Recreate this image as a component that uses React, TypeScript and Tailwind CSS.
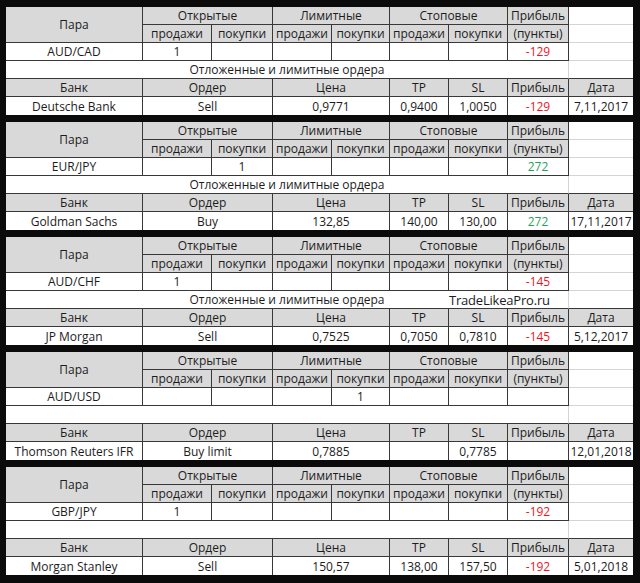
import React from "react"

type Tone = "red" | "green" | ""

interface Trade {
  pair: string
  open: [string, string]
  limit: [string, string]
  stop: [string, string]
  profit: string
  tone: Tone
  note: boolean
  watermark?: string
  bank: string
  order: string
  price: string
  tp: string
  sl: string
  date: string
}

const trades: Trade[] = [
  { pair: "AUD/CAD", open: ["1", ""], limit: ["", ""], stop: ["", ""], profit: "-129", tone: "red", note: true, bank: "Deutsche Bank", order: "Sell", price: "0,9771", tp: "0,9400", sl: "1,0050", date: "7,11,2017" },
  { pair: "EUR/JPY", open: ["", "1"], limit: ["", ""], stop: ["", ""], profit: "272", tone: "green", note: true, bank: "Goldman Sachs", order: "Buy", price: "132,85", tp: "140,00", sl: "130,00", date: "17,11,2017" },
  { pair: "AUD/CHF", open: ["1", ""], limit: ["", ""], stop: ["", ""], profit: "-145", tone: "red", note: true, watermark: "TradeLikeaPro.ru", bank: "JP Morgan", order: "Sell", price: "0,7525", tp: "0,7050", sl: "0,7810", date: "5,12,2017" },
  { pair: "AUD/USD", open: ["", ""], limit: ["", "1"], stop: ["", ""], profit: "", tone: "", note: false, bank: "Thomson Reuters IFR", order: "Buy limit", price: "0,7885", tp: "", sl: "0,7785", date: "12,01,2018" },
  { pair: "GBP/JPY", open: ["1", ""], limit: ["", ""], stop: ["", ""], profit: "-192", tone: "red", note: false, bank: "Morgan Stanley", order: "Sell", price: "150,57", tp: "138,00", sl: "157,50", date: "5,01,2018" },
]

const toneClass = (t: Tone) =>
  t === "red" ? "text-[#f0141e]" : t === "green" ? "text-[#1fa35a]" : ""

function Cell({ children, className = "" }: { children?: React.ReactNode; className?: string }) {
  return (
    <div className={`flex items-center justify-center whitespace-nowrap pt-px border-r border-b border-[#383838] leading-none ${className}`}>
      {children}
    </div>
  )
}

const head = "bg-[#d9d9d9]"
const side = "bg-white border-r-0 border-b-[#d4d4d4]"

function TradeBlock({ t }: { t: Trade }) {
  return (
    <div className="grid grid-cols-[137px_69px_61px_59px_58px_59px_59px_61px_64px] grid-rows-[repeat(6,18px)] bg-white">
      <Cell className={`${head} row-span-2`}>Пара</Cell>
      <Cell className={`${head} col-span-2`}>Открытые</Cell>
      <Cell className={`${head} col-span-2`}>Лимитные</Cell>
      <Cell className={`${head} col-span-2`}>Стоповые</Cell>
      <Cell className={head}>Прибыль</Cell>
      <Cell className={side} />

      <Cell className={head}>продажи</Cell>
      <Cell className={head}>покупки</Cell>
      <Cell className={head}>продажи</Cell>
      <Cell className={head}>покупки</Cell>
      <Cell className={head}>продажи</Cell>
      <Cell className={head}>покупки</Cell>
      <Cell className={head}>(пункты)</Cell>
      <Cell className={side} />

      <Cell>{t.pair}</Cell>
      <Cell>{t.open[0]}</Cell>
      <Cell>{t.open[1]}</Cell>
      <Cell>{t.limit[0]}</Cell>
      <Cell>{t.limit[1]}</Cell>
      <Cell>{t.stop[0]}</Cell>
      <Cell>{t.stop[1]}</Cell>
      <Cell className={toneClass(t.tone)}>{t.profit}</Cell>
      <Cell className={side} />

      <Cell className="relative col-span-8 border-r-[#d4d4d4]">
        {t.note ? "Отложенные и лимитные ордера" : ""}
        {t.watermark && (
          <span className="absolute left-[443px] top-[3px] text-[13px] tracking-[-0.2px]">{t.watermark}</span>
        )}
      </Cell>
      <Cell className="bg-white border-r-0" />

      <Cell className={head}>Банк</Cell>
      <Cell className={`${head} col-span-2`}>Ордер</Cell>
      <Cell className={`${head} col-span-2`}>Цена</Cell>
      <Cell className={head}>TP</Cell>
      <Cell className={head}>SL</Cell>
      <Cell className={head}>Прибыль</Cell>
      <Cell className={`${head} border-r-0`}>Дата</Cell>

      <Cell className="border-b-0">{t.bank}</Cell>
      <Cell className="col-span-2 border-b-0">{t.order}</Cell>
      <Cell className="col-span-2 border-b-0">{t.price}</Cell>
      <Cell className="border-b-0">{t.tp}</Cell>
      <Cell className="border-b-0">{t.sl}</Cell>
      <Cell className={`border-b-0 ${toneClass(t.tone)}`}>{t.profit}</Cell>
      <Cell className="border-b-0 border-r-0">{t.date}</Cell>
    </div>
  )
}

export default function App() {
  return (
    <div className="w-[640px] h-[583px] bg-[#0b0b0b] pt-[7px] pb-[8px] pl-[6px] pr-[7px] font-['Open_Sans',sans-serif] text-[12px] text-[#1c1c1c]">
      <div className="flex flex-col gap-[7px]">
        {trades.map((t) => (
          <TradeBlock key={t.pair} t={t} />
        ))}
      </div>
    </div>
  )
}
